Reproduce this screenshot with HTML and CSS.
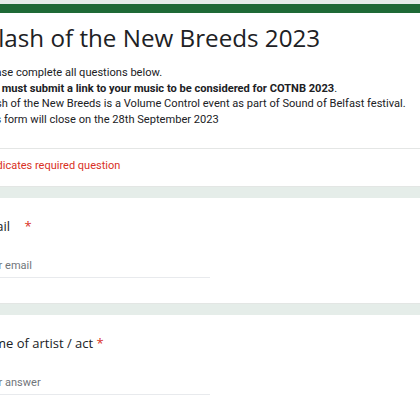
FILE: index.html
```html
<!DOCTYPE html>
<html>
<head lang="en">
    <meta charset="UTF-8">
    <title>Clash of the New Breeds 2023</title>
    <link rel="stylesheet" href="styles.css">
</head>
<body>

    <div class="form">
        <div class="card header">
            <h1 class="title">Clash of the New Breeds 2023</h1>
            <div class="desc">
                <p>Please complete all questions below.</p>
                <p><b>You must submit a link to your music to be considered for COTNB 2023</b>.</p>
                <p>Clash of the New Breeds is a Volume Control event as part of Sound of Belfast festival.</p>
                <p>This form will close on the 28th September 2023</p>
            </div>
            <div class="required">* Indicates required question</div>
        </div>

        <div class="card question">
            <div class="label">Email <span class="star star-wide">*</span></div>
            <div class="input">Your email</div>
        </div>

        <div class="card question">
            <div class="label">Name of artist / act <span class="star">*</span></div>
            <div class="input">Your answer</div>
        </div>
    </div>

</body>
</html>
```

FILE: styles.css
```css
* {
    padding: 0;
    margin: 0;
}
body {
    background-color: #e5ede9;
    font-family: Roboto, "Liberation Sans", sans-serif;
    color: #202124;
    overflow: hidden;
}
.form {
    width: 640px;
    margin: 4px 0 0 -44px;
    display: flex;
    flex-direction: column;
    gap: 11px;
}
.card {
    background-color: #fff;
    border-radius: 8px;
    border-bottom: 1px solid #e3e6e4;
}
.header {
    border-top: 9px solid #1e6a36;
}
.title {
    font-family: "Open Sans", Roboto, sans-serif;
    font-weight: 400;
    font-size: 24.2px;
    line-height: 36px;
    padding: 7px 24px 0 27px;
}
.desc {
    font-size: 11.1px;
    line-height: 15.6px;
    padding: 9px 24px 21px;
    border-bottom: 1px solid #e4e6e5;
}
.desc b {
    font-weight: 700;
}
.required {
    color: #d93025;
    font-size: 11px;
    line-height: 16px;
    padding: 9px 24px 12px;
}
.question {
    padding: 18px 24px 25px;
}
.label {
    font-family: "Open Sans", Roboto, sans-serif;
    font-size: 13px;
    line-height: 20px;
    margin-left: -3px;
}
.star {
    color: #d93025;
}
.star-wide {
    margin-left: 11px;
}
.input {
    width: 230px;
    margin-top: 21px;
    font-size: 11px;
    line-height: 18px;
    color: #70757a;
    padding-bottom: 2px;
    border-bottom: 1px solid #e8eaed;
}
```
